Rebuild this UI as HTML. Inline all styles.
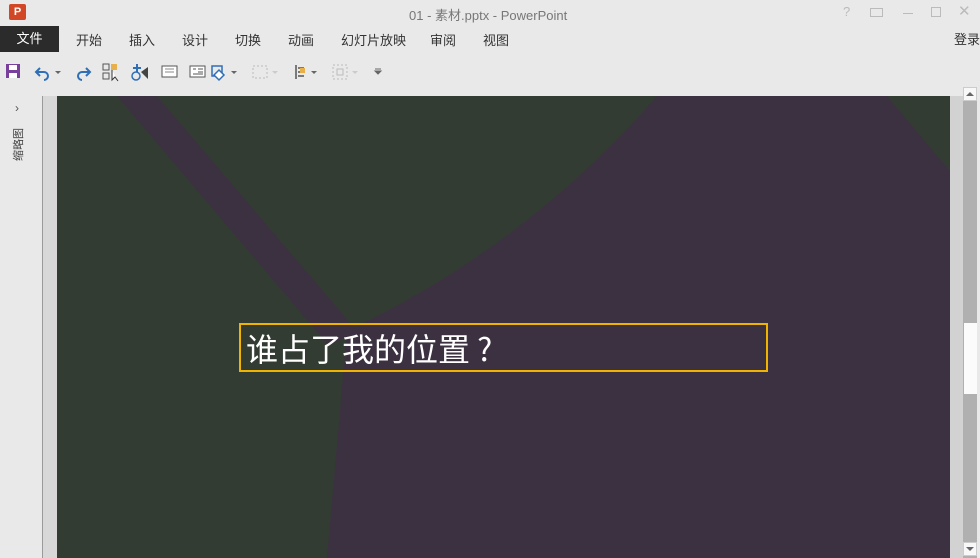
<!DOCTYPE html>
<html><head><meta charset="utf-8">
<style>
*{margin:0;padding:0;box-sizing:border-box}
body{width:980px;height:558px;overflow:hidden;background:#e9e9e9;font-family:"Liberation Sans","Noto Sans CJK SC",sans-serif;position:relative;color:#333}
.abs{position:absolute}
.tab{position:absolute;top:30px;font-size:13px;color:#333;white-space:nowrap}
</style></head><body>
<div class="abs" style="left:9px;top:4px;width:17px;height:16px;background:#d24726;border-radius:2px;color:#fff;font-size:11px;font-weight:bold;line-height:16px;text-align:center">P</div>
<div class="abs" style="left:409px;top:5px;font-size:13px;color:#777;white-space:nowrap">01 - 素材.pptx - PowerPoint</div>
<div class="abs" style="left:843px;top:4px;font-size:13px;color:#bbb">?</div>
<div class="abs" style="left:870px;top:8px;width:13px;height:9px;border:1px solid #bbb"></div>
<div class="abs" style="left:903px;top:13px;width:10px;height:1px;background:#bbb"></div>
<div class="abs" style="left:931px;top:7px;width:10px;height:10px;border:1px solid #bbb"></div>
<div class="abs" style="left:958px;top:2px;font-size:15px;color:#bbb">✕</div>
<div class="abs" style="left:0;top:26px;width:59px;height:26px;background:#2b2b2b;color:#fff;font-size:13px;line-height:26px;text-align:center">文件</div>
<div class="tab" style="left:76px">开始</div>
<div class="tab" style="left:129px">插入</div>
<div class="tab" style="left:182px">设计</div>
<div class="tab" style="left:235px">切换</div>
<div class="tab" style="left:288px">动画</div>
<div class="tab" style="left:341px">幻灯片放映</div>
<div class="tab" style="left:430px">审阅</div>
<div class="tab" style="left:483px">视图</div>
<div class="abs" style="left:954px;top:29px;font-size:13px;color:#333;white-space:nowrap">登录</div>
<svg class="abs" style="left:0;top:60px" width="400" height="24">
<rect x="6" y="4" width="14" height="14" fill="#7a3f9d"/><rect x="9" y="5" width="8" height="5" fill="#fff"/><rect x="9" y="13" width="8" height="5" fill="#fff"/>
<path d="M40 8 l-4 4 l4 4 M36 12 h8 a4 4 0 0 1 0 8" stroke="#2f6fb7" stroke-width="2" fill="none"/>
<path d="M55 11 l3 3 l3-3z" fill="#666"/>
<path d="M86 8 l4 4 l-4 4 M90 12 h-8 a4 4 0 0 0 0 8" stroke="#2f6fb7" stroke-width="2" fill="none"/>
<rect x="103" y="4" width="6" height="6" fill="none" stroke="#555"/><rect x="103" y="13" width="6" height="6" fill="none" stroke="#555"/><rect x="111" y="4" width="6" height="6" fill="#e8b04b"/><path d="M112 10 l0 10 l3-3 l3 4" stroke="#333" fill="#fff"/>
<path d="M133 8 h8 M137 4 v8" stroke="#2f6fb7" stroke-width="2"/><circle cx="136" cy="16" r="4" fill="none" stroke="#2f6fb7" stroke-width="1.5"/><path d="M141 12 l7-5 v12z" fill="#444"/>
<rect x="162" y="6" width="15" height="11" fill="#fff" stroke="#555"/><path d="M165 9 h9 M165 12 h9" stroke="#888"/>
<rect x="190" y="6" width="15" height="11" fill="#fff" stroke="#555"/><path d="M193 9 h3 M198 9 h5 M198 12 h5 M193 14 h10" stroke="#555"/>
<rect x="212" y="6" width="10" height="10" fill="none" stroke="#2f6fb7" stroke-width="1.5"/><path d="M219 10 l5 5 l-5 5 l-5-5z" fill="#fff" stroke="#2f6fb7" stroke-width="1.5"/><path d="M231 11 l3 3 l3-3z" fill="#666"/>
<rect x="253" y="6" width="14" height="12" fill="none" stroke="#bbb" stroke-dasharray="2,2"/><path d="M272 11 l3 3 l3-3z" fill="#ccc"/>
<path d="M296 5 v14 M298 8 h6 M298 12 h4 M298 16 h6" stroke="#555" stroke-width="1.5"/><rect x="300" y="8" width="5" height="5" fill="#e8b04b"/><path d="M311 11 l3 3 l3-3z" fill="#666"/>
<rect x="333" y="5" width="14" height="14" fill="none" stroke="#bbb" stroke-dasharray="2,2"/><rect x="337" y="9" width="6" height="6" fill="none" stroke="#bbb"/><path d="M352 11 l3 3 l3-3z" fill="#ccc"/>
<path d="M375 11 l3 3 l3-3z M375 9 h6" stroke="#666" fill="#666"/>
</svg>
<div class="abs" style="left:42px;top:96px;width:1px;height:462px;background:#9a9a9a"></div>
<div class="abs" style="left:43px;top:96px;width:14px;height:462px;background:#d8d8d8"></div>
<div class="abs" style="left:15px;top:101px;font-size:12px;color:#555">›</div>
<div class="abs" style="left:12px;top:128px;font-size:11px;color:#444;writing-mode:vertical-rl;text-orientation:sideways;transform:rotate(180deg);line-height:14px">缩略图</div>
<svg class="abs" style="left:57px;top:96px" width="893" height="462">
<rect width="893" height="462" fill="#323c33"/>
<path d="M600 0 L893 0 L893 462 L270 462 L290 235 Q470 150 600 0Z" fill="#3c3140"/>
<path d="M60 0 L100 0 L300 235 L272 250Z" fill="#3c3140"/>
<path d="M830 0 L893 0 L893 75Z" fill="#323c33"/>
</svg>
<div class="abs" style="left:950px;top:96px;width:13px;height:462px;background:#d2d2d2"></div>
<div class="abs" style="left:239px;top:323px;width:529px;height:49px;border:2px solid #f0b400"></div>
<div class="abs" style="left:246px;top:326px;font-size:32px;color:#fff;line-height:44px;white-space:nowrap;font-family:'Noto Sans CJK SC',sans-serif">谁占了我的位置 ?</div>
<div class="abs" style="left:963px;top:88px;width:14px;height:470px;background:#b0b0b0"></div>
<div class="abs" style="left:963px;top:87px;width:14px;height:14px;background:#f8f8f8;border:1px solid #ccc"></div>
<div class="abs" style="left:966px;top:92px;width:0;height:0;border-left:4px solid transparent;border-right:4px solid transparent;border-bottom:4px solid #666"></div>
<div class="abs" style="left:964px;top:323px;width:13px;height:71px;background:#fbfbfb"></div>
<div class="abs" style="left:963px;top:542px;width:14px;height:14px;background:#f8f8f8;border:1px solid #ccc"></div>
<div class="abs" style="left:966px;top:547px;width:0;height:0;border-left:4px solid transparent;border-right:4px solid transparent;border-top:4px solid #666"></div>
</body></html>
